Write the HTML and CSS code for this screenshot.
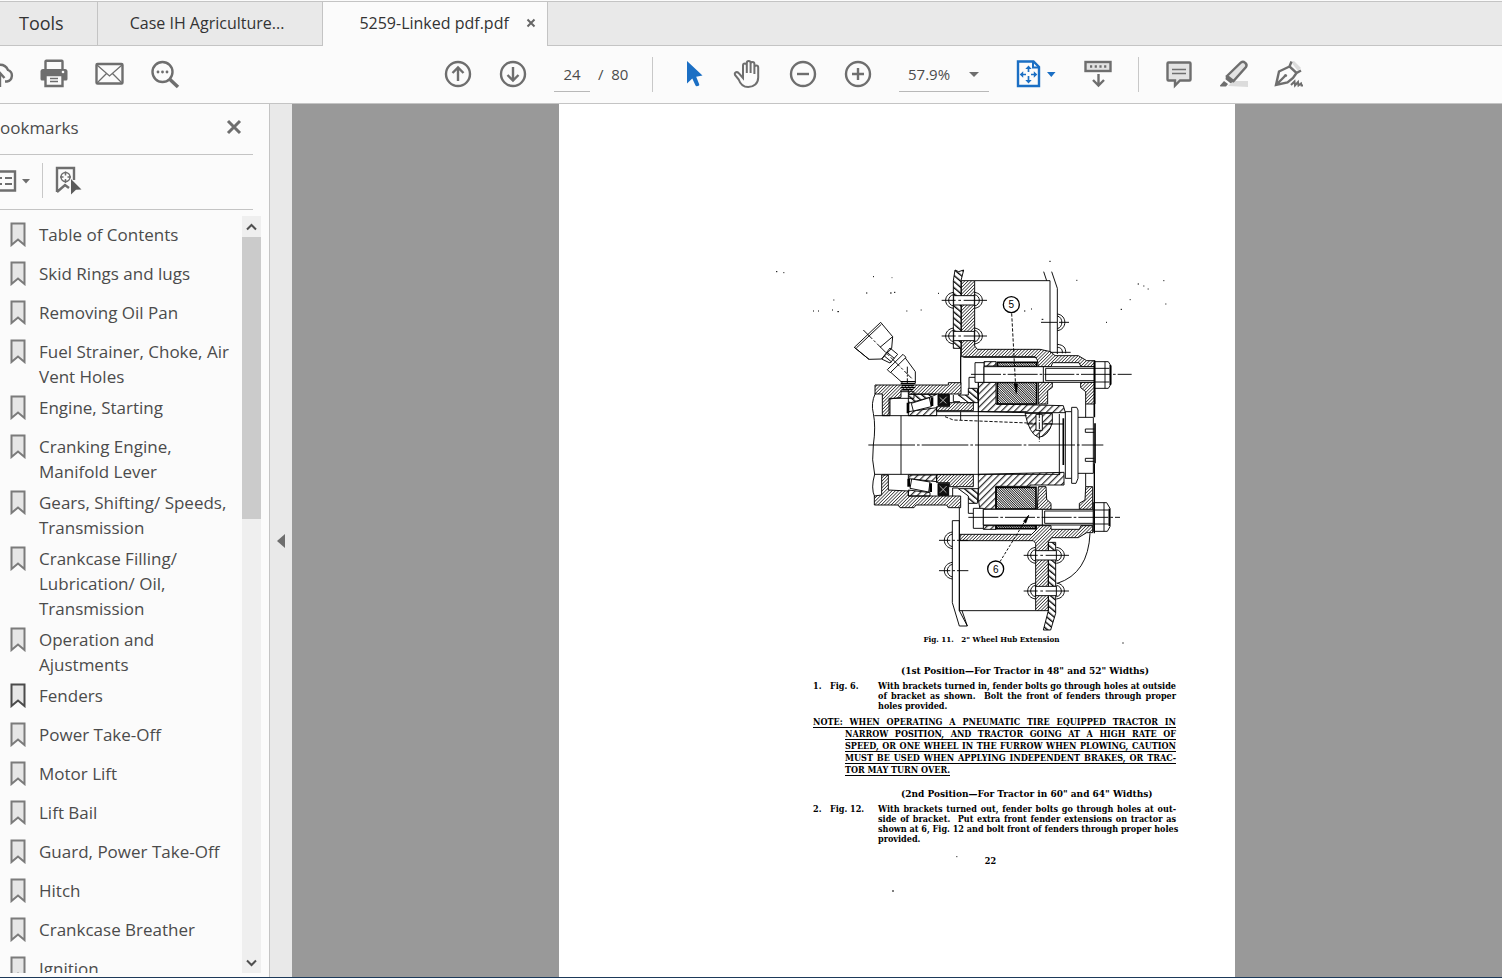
FILE: index.html
```html
<!DOCTYPE html>
<html lang="en">
<head>
    <meta charset="UTF-8">
    <meta name="viewport" content="width=device-width, initial-scale=1.0">
    <title>5259-Linked pdf.pdf</title>
    <link rel="stylesheet" href="styles.css">
</head>
<body>

<!-- TABS -->
<nav class="tabs">
    <button class="tab tab-tools">Tools</button>
    <button class="tab tab-doc">Case IH Agriculture...</button>
    <div class="tab tab-current">
        <span>5259-Linked pdf.pdf</span>
        <button class="tab-close" aria-label="Close tab">
            <svg width="10" height="10" viewBox="0 0 10 10"><path d="M1.500 1.500l7 7M8.500 1.500l-7 7" stroke="#666" stroke-width="2"/></svg>
        </button>
    </div>
</nav>

<!-- TOOLBAR -->
<header class="toolbar">
    <div class="tool-group">
        <button class="tool tool-cut" aria-label="Upload">
            <svg width="14" height="28" viewBox="14 0 14 28"><path d="M5 12a9 9 0 0 1 17-2a6 6 0 0 1-1 11.500h-2M14 27V14M8.500 18.500l5.500-5.500l4.500 5"/></svg>
        </button>
        <button class="tool" aria-label="Print">
            <svg width="28" height="28" viewBox="0 0 28 28">
                <path d="M5.500 9V1.500q0-.7.7-.7h15.600q.7 0 .7.7V9" fill="#fbfbfb"/>
                <path d="M3 9h22q2.500 0 2.500 2.500V19q0 1.500-1.500 1.500H2Q.5 20.500.5 19v-7.500Q.5 9 3 9z" fill="#6e6e6e" stroke="none"/>
                <path d="M5.500 15h17v11h-17z" fill="#fbfbfb"/>
                <path d="M10 18.500h8M10 21.500h8" stroke-width="1.500"/>
                <circle cx="23" cy="12" r="1.300" fill="#fbfbfb" stroke="none"/>
            </svg>
        </button>
        <button class="tool" aria-label="Email">
            <svg width="28" height="28" viewBox="0 0 28 28"><rect x="1.500" y="4" width="26" height="19.500" rx="1"/><path d="M2 5l12.500 11L27 5M2 23l9.500-9.500M27 23l-9.500-9.500" stroke-width="1.300"/></svg>
        </button>
        <button class="tool" aria-label="Find">
            <svg width="30" height="28" viewBox="0 0 30 28"><circle cx="12.500" cy="12" r="10"/><path d="M20 19.500l8 7.500" stroke-width="3.500"/><g fill="#6e6e6e" stroke="none"><circle cx="8" cy="12" r="1.400"/><circle cx="12.500" cy="12" r="1.400"/><circle cx="17" cy="12" r="1.400"/></g></svg>
        </button>
    </div>

    <div class="tool-group tool-main">
        <button class="tool" aria-label="Previous page">
            <svg width="28" height="28" viewBox="0 0 28 28"><circle cx="14" cy="14" r="12"/><path d="M14 21V8M8.500 13L14 7.500l5.500 5.500"/></svg>
        </button>
        <button class="tool" aria-label="Next page">
            <svg width="28" height="28" viewBox="0 0 28 28"><circle cx="14" cy="14" r="12"/><path d="M14 7v13M8.500 15l5.500 5.500l5.500-5.500"/></svg>
        </button>
        <div class="page-nav">
            <input class="page-input" type="text" value="24" aria-label="Page number">
            <span>/&nbsp; 80</span>
        </div>
        <span class="separator"></span>
        <button class="tool" aria-label="Select">
            <svg width="28" height="28" viewBox="0 0 28 28"><path d="M8 1l15.500 14.500l-6.300 1.200l3 7.500q.3 1-.6 1.500l-1.600.6q-1 .2-1.500-.7l-3.200-7.100L8 23.500z" fill="#1b6fc4" stroke="none"/></svg>
        </button>
        <button class="tool" aria-label="Hand">
            <svg width="28" height="28" viewBox="0 0 28 28"><path stroke-width="2" d="M9 15V5.500q0-2 1.900-2t1.900 2V13V3q0-2 1.900-2t1.900 2v10V4q0-2 1.900-2t1.900 2v10V7.500q0-2 1.900-2t1.900 2v10c0 6-4.500 9.500-10 9.500c-5 0-8-3-9.500-7.500L1 15q-.8-2 1-2.700t3 1.200L9 18z"/></svg>
        </button>
        <button class="tool" aria-label="Zoom out">
            <svg width="28" height="28" viewBox="0 0 28 28"><circle cx="14" cy="14" r="12"/><path d="M8 14h12"/></svg>
        </button>
        <button class="tool" aria-label="Zoom in">
            <svg width="28" height="28" viewBox="0 0 28 28"><circle cx="14" cy="14" r="12"/><path d="M8 14h12M14 8v12"/></svg>
        </button>
        <div class="zoom-box">
            <select class="zoom-select" aria-label="Zoom level"><option>57.9%</option></select>
        </div>
        <button class="tool tool-fit" aria-label="Fit page">
            <svg width="40" height="28" viewBox="0 0 40 28">
                <g stroke="#1b6fc4">
                    <path d="M2 1.500h15.500l5.500 5.500v19H2z"/><path d="M17 1v6.500h6" stroke-width="2"/>
                    <path d="M12.500 8v4M12.500 16v5M6 14.500h4M15 14.500h4" stroke-width="1.700"/>
                </g>
                <path d="M12.500 5.500l3.200 3.500H9.300zM12.500 23.500l3.200-3.500H9.300zM3.700 14.500l3.500-3.200v6.400zM21.300 14.500l-3.500-3.200v6.400zM31 12h8.500l-4.200 5z" fill="#1b6fc4" stroke="none"/>
            </svg>
        </button>
        <button class="tool" aria-label="Scrolling">
            <svg width="28" height="28" viewBox="0 0 28 28"><rect x="1.500" y="2" width="25" height="9" fill="#e3e3e3"/><path d="M6 6.500h17" stroke-width="2.600" stroke-dasharray="2.200 2.500"/><path d="M14.500 14v11M9 20l5.500 5.500L20 20"/></svg>
        </button>
        <span class="separator"></span>
        <button class="tool" aria-label="Comment">
            <svg width="28" height="28" viewBox="0 0 28 28"><path d="M3.500 2.500h21q1 0 1 1v16q0 1-1 1H15l-5 5v-5H3.500q-1 0-1-1v-16q0-1 1-1z" fill="#e3e3e3"/><path d="M7 9.500h14M7 13.500h14" stroke-width="1.400"/></svg>
        </button>
        <button class="tool" aria-label="Highlight">
            <svg width="28" height="28" viewBox="0 0 28 28"><path d="M8 26l5-5h15v6z" fill="#dcdcdc" stroke="none"/><path d="M7 16L21 2.500q2-1.500 4 .2q2.500 2 1 4.300L13.500 21z" fill="#e3e3e3"/><path d="M6 15.500l8 6l-3.500 1.700l-5-4zM0 25.500L4 21l4 3l-2 2.500H1q-1.500 0-1-1z" fill="#6e6e6e" stroke="none"/></svg>
        </button>
        <button class="tool" aria-label="Sign">
            <svg width="28" height="28" viewBox="0 0 28 28"><path d="M16 2l3-1l7 7l-3 3z" fill="#dcdcdc" stroke="none"/><path d="M16.500 1.500L14.500 6.500l7 6.500l4.500-2.500M14.500 6.500L4 11.500L1 25l11.500-2.500L18 18l3.500-5M1.500 24.500l8.500-8.500"/><circle cx="10.500" cy="15.500" r="1.600" fill="#6e6e6e" stroke="none"/><path d="M16 25l3.500-3.500l.5 4l3-3.500l.5 3.500l2.500-2l.5 2h1.500" stroke-width="2"/></svg>
        </button>
    </div>
</header>

<main class="workspace">
    <!-- BOOKMARKS -->
    <aside class="sidebar">
        <div class="sidebar-header">
            <h2>ookmarks</h2>
            <button class="tool" aria-label="Close panel">
                <svg width="16" height="16" viewBox="0 0 16 16"><path d="M2 1l12 12M14 1L2 13" stroke-width="3"/></svg>
            </button>
        </div>
        <div class="sidebar-tools">
            <button class="tool" aria-label="Options">
                <svg width="30" height="28" viewBox="0 0 30 28"><path d="M-3 4.500h18v19H-3" stroke-width="2.400"/><path d="M0 11h2M5 11h7M0 17h2M5 17h7" stroke-width="2"/><path d="M22 12h8l-4 4.500z" fill="#6e6e6e" stroke="none"/></svg>
            </button>
            <span class="separator"></span>
            <button class="tool" aria-label="Find current bookmark">
                <svg width="28" height="30" viewBox="2 1 28 30"><path d="M2 27V3h17v12M2 27l8-7l4 3" stroke-width="2.400"/><circle cx="10.500" cy="12" r="4.500" stroke-width="1.500"/><path d="M10.500 6.500v4M10.500 14v4M5 12h3.500M12.500 12H16" stroke-width="1.500"/><path d="M16 14l10.500 10.500l-5.500.3l-5 4.700z" fill="#5c5c5c" stroke="none"/></svg>
            </button>
        </div>
        <div class="bookmarks">
            <ul class="bookmark-list" id="bookmark-list">
                <!-- filled by script.js -->
            </ul>
            <div class="scrollbar">
                <button class="scroll-btn" aria-label="Scroll up"><svg width="11" height="8" viewBox="0 0 11 8"><path d="M1 6.500l4.500-4.500L10 6.500"/></svg></button>
                <div class="scroll-thumb"></div>
                <button class="scroll-btn scroll-down" aria-label="Scroll down"><svg width="11" height="8" viewBox="0 0 11 8"><path d="M1 1.500L5.500 6L10 1.500"/></svg></button>
            </div>
        </div>
    </aside>
    <button class="collapse" aria-label="Collapse panel">
        <svg width="8" height="14" viewBox="0 0 8 14"><path d="M8 0v14L0 7z" fill="#6e6e6e"/></svg>
    </button>

    <!-- DOCUMENT -->
    <section class="viewer">
        <article class="sheet">
            <figure class="drawing">
                <svg viewBox="-81 0 1089 1110">
                    <defs>
                        <pattern id="fine" width="7" height="7" patternUnits="userSpaceOnUse" patternTransform="rotate(45)"><path d="M1 0v7" stroke="#000" stroke-width="2"/></pattern>
                        <pattern id="coarse" width="14" height="14" patternUnits="userSpaceOnUse" patternTransform="rotate(45)"><path d="M2 0v14" stroke="#000" stroke-width="3"/></pattern>
                        <pattern id="coarse-back" width="14" height="14" patternUnits="userSpaceOnUse" patternTransform="rotate(-50)"><path d="M2 0v14" stroke="#000" stroke-width="4"/></pattern>
                        <pattern id="dense" width="5" height="5" patternUnits="userSpaceOnUse" patternTransform="rotate(-45)"><path d="M1 0v5" stroke="#000" stroke-width="2.500"/></pattern>
                        <g id="rivet">
                            <path d="M0-24C-32-20-32 20 0 24M0-17C-20-14-20 14 0 17M62-24C94-20 94 20 62 24M62-17C82-14 82 14 62 17" fill="none"/>
                            <rect y="-14" width="62" height="28" fill="#fff"/>
                            <path d="M-36 0h42m8 0h8m8 0h70" fill="none"/>
                        </g>
                        <path id="half-rivet" d="M0-25C-32-20-32 20 0 25M0-19C-20-14-20 14 0 19M-40 0h34m6 0h8m6 0h34"/>
                    </defs>

                    <!-- upper left -->
                    <g class="ink">
                        <path d="M43 262L122 187L158 230L155 265L125 297L87 298zM49 264L124 193M87 298L43 262M125 297L150 264L173 283L150 309zM133 288l22 18M141 277l22 18M150 335L188 369M196 294L226 335V370M158 230L120 262"/>
                        <path d="M142 329L189 283L198 292L151 338z" fill="#fff"/>
                        <path d="M70 210L215 355" stroke-dasharray="38 6 8 6"/>
                        <path d="M202 320V372" stroke-dasharray="20 5 5 5"/>
                        <path d="M182 365H226M182 371H226M185 377H222M182 383H226M188 389H220" stroke-width="4"/>
                        <path d="M345 30L356 35L371 30L363 62V265H340V62z" fill="url(#coarse-back)"/>
                        <path d="M364 62H404V258L412 268H600L632 275L645 287H715L740 302H765V320H723L717 308H638L633 320H595L592 300L585 290H364z" fill="url(#fine)"/>
                        <path d="M404 62H630M362 265V370M362 290V370M370 292H590"/>
                        <path d="M105 375H325V368H363V402H205V390H183V412L150 417V467H127V402H105z" fill="url(#fine)"/>
                        <path d="M183 395H222V415H147V467M106 400Q92 430 100 460Q108 500 100 555Q94 600 104 643Q92 685 104 710"/>
                        <path d="M205 403H290L270 412L205 430z" fill="url(#coarse-back)"/>
                        <path d="M205 467V455L290 443V467z" fill="url(#coarse)"/>
                        <path d="M214 430L268 413L274 440L220 453z" fill="#fff"/>
                        <path d="M204 428v32M276 412v26" stroke-width="8"/>
                        <path d="M294 403H328V437H294z" fill="#111"/>
                        <path d="M299 412l20 18M320 410l-20 20" stroke="#fff" stroke-width="2"/>
                        <path d="M328 428H400V452H290V440H328z" fill="url(#fine)"/>
                        <path d="M355 405H385V385H412L415 428H385z" fill="url(#coarse-back)"/>
                        <path d="M387 385V352H405M340 405V425H360"/>
                    </g>
                    <use href="#rivet" x="341" y="121" class="ink"/>
                    <use href="#rivet" x="341" y="228" class="ink"/>

                    <!-- shaft -->
                    <g class="ink">
                        <path d="M103 467H560M103 643H660M183 467V643M415 360V643M290 455H560" />
                        <path d="M85 555H790" stroke-dasharray="140 6 8 6"/>
                        <path d="M315 470L340 480L640 492" stroke-dasharray="10 5"/>
                        <path d="M362 455v25M560 492H672"/>
                    </g>

                    <!-- upper right -->
                    <g class="ink" transform="translate(420 0)">
                        <path d="M191 35L200 62M215 35L232 85V282M210 62V275"/>
                        <path d="M232 162C262 166 262 208 232 212M232 168C250 172 250 202 232 206M183 187h48m6 0h30M232 253C250 255 258 262 257 280M232 262C244 262 248 270 247 280M210 277h62"/>
                        <path d="M5 367H48V432L250 437L256 458H140L0 455H-5V367z" fill="url(#coarse)"/>
                        <path d="M12 305H48V318H12z" fill="url(#coarse)"/>
                        <path d="M52 307H170V320H52zM52 367H170V432H52z" fill="url(#dense)" stroke-width="5"/>
                        <path d="M175 367H217V382L203 392V432H175z" fill="url(#fine)"/>
                        <path d="M302 367H345V432H317V395L302 383z" fill="url(#fine)"/>
                        <path d="M-15 308H12V367H-15z" fill="#fff"/>
                        <path d="M12 320H345V367H12zM190 320V367M197 325V362M197 325H345M197 362H345" fill="#fff"/>
                        <path d="M345 305H385L393 318V372L385 385H345zM345 325H388M345 366H388M375 305V385" fill="#fff"/>
                        <path d="M391 315V375" stroke-width="5"/>
                        <path d="M-27 343H455" stroke-dasharray="90 6 8 6"/>
                        <path d="M135 460H217V488Q205 530 175 532Q148 522 135 460z" fill="url(#coarse)"/>
                        <path d="M168 463H187V511H168z" fill="#fff"/>
                        <path d="M178 455V545" stroke-dasharray="20 4 4 4"/>
                        <path d="M238 462V643M256 455H275V442H290L294 450V655L288 670H275V655H256zM275 455V655M294 472H340M294 640H340M317 432V472M317 640V680" />
                        <path d="M250 475V615M343 302V472M345 490V610" stroke-width="5"/>
                        <path d="M340 472V640M343 507H316V517H343M343 595H316V604H343"/>
                        <circle cx="94" cy="134" r="24" fill="#fff" stroke-width="4"/>
                        <path d="M95 160L107 380" stroke-dasharray="10 5"/>
                        <path d="M103 372h9l-3 28z" fill="#000"/>
                    </g>

                    <!-- lower left -->
                    <g class="ink" transform="translate(0 540)">
                        <path d="M103 168L125 165V105H145V150L205 153V168H362V203H325L320 195H228L222 203H180L174 195H103z" fill="url(#fine)"/>
                        <path d="M205 105H290V125L205 116zM205 168V150L270 158V168z" fill="url(#coarse)"/>
                        <path d="M215 117L270 126L266 156L210 145z" fill="#fff"/>
                        <path d="M206 116v24M272 130v26" stroke-width="8"/>
                        <path d="M294 131H326V166H294z" fill="#111"/>
                        <path d="M299 138l20 20M320 138l-20 20" stroke="#fff" stroke-width="2"/>
                        <path d="M290 104H400V140H328V128H290z" fill="url(#fine)"/>
                        <path d="M355 146H415L412 190H385V168z" fill="url(#coarse-back)"/>
                        <path d="M385 190V220H400M338 168V144H355M358 203V512H587M337 242H358V512L382 558H358L337 488zM366 512L382 558"/>
                    </g>
                    <use href="#half-rivet" x="337" y="841" class="ink"/>
                    <use href="#half-rivet" x="337" y="932" class="ink"/>

                    <!-- lower right -->
                    <g class="ink" transform="translate(420 540)">
                        <path d="M-5 103L120 100L252 97V135H150V139H48V207H0L-5 180z" fill="url(#coarse)"/>
                        <path d="M48 142H168V207H48zM48 257H168V266H48z" fill="url(#dense)" stroke-width="5"/>
                        <path d="M10 257H48V268H10z" fill="url(#coarse)"/>
                        <path d="M175 140H198L200 178L213 190V208H172z" fill="url(#fine)"/>
                        <path d="M317 140H338V208H298V190L315 180z" fill="url(#fine)"/>
                        <path d="M-60 283H155L168 270V257H213V268H298L303 257H338V278H320L295 293H215L205 305V512H167V310L160 302H-60z" fill="url(#fine)"/>
                        <path d="M205 307H227V520L212 570H190L205 512z" fill="url(#coarse-back)"/>
                        <path d="M-20 205H10V265H-20z" fill="#fff"/>
                        <path d="M10 208H340V255H10zM187 208V255M194 213V250M194 213H340M194 250H340" fill="#fff"/>
                        <path d="M340 188H380L390 205V260L382 274H340zM340 210H386M340 252H386M372 188V274" fill="#fff"/>
                        <path d="M388 206V258" stroke-width="5"/>
                        <path d="M-35 232H420" stroke-dasharray="90 6 8 6"/>
                        <path d="M343 70V280" stroke-width="4"/>
                        <path d="M330 280Q325 400 232 430"/>
                        <circle cx="47" cy="387" r="24" fill="#fff" stroke-width="4"/>
                        <path d="M60 365L132 248" stroke-dasharray="8 5"/>
                        <path d="M146 226L131 244L137 249z" fill="#000"/>
                    </g>
                    <use href="#rivet" x="587" y="886" class="ink"/>
                    <use href="#rivet" x="587" y="993" class="ink"/>

                    <g class="callout">
                        <text x="514" y="145">5</text>
                        <text x="467" y="938">6</text>
                    </g>
                    <!-- scan specks -->
                    <path class="specks" d="M-192 35h4M-170 38h3M99 50h3M155 53h2M78 99h4M150 99h5M162 97h4M294 100h3M199 153h3M242 150h3M-24 150h3M-8 155h5M-20 120h3M628 4h4M709 61h3M893 72h4M910 78h3M869 119h3M842 148h4M798 187h3M573 147h3M552 153h4M605 178h5M847 1149h4M-81 153h3M-66 153h3M970 62h3M923 87h3M976 132h3M156 1893h6M349 1790h3"/>
                </svg>
                <figcaption>Fig. 11.&nbsp;&nbsp; 2" Wheel Hub Extension</figcaption>
            </figure>

            <h3>(1st Position—For Tractor in 48" and 52" Widths)</h3>
            <div class="step">
                <span>1.&nbsp;&nbsp; Fig. 6.</span>
                <p>With brackets turned in, fender bolts go through holes at outside<br>of bracket as shown.&nbsp; Bolt the front of fenders through proper<span class="last">holes provided.</span></p>
            </div>
            <p class="note"><span class="first">NOTE: WHEN OPERATING A PNEUMATIC TIRE EQUIPPED TRACTOR IN</span>NARROW POSITION, AND TRACTOR GOING AT A HIGH RATE OF<br>SPEED, OR ONE WHEEL IN THE FURROW WHEN PLOWING, CAUTION<br>MUST BE USED WHEN APPLYING INDEPENDENT BRAKES, OR TRAC-<span class="last">TOR MAY TURN OVER.</span></p>
            <h3>(2nd Position—For Tractor in 60" and 64" Widths)</h3>
            <div class="step">
                <span>2.&nbsp;&nbsp; Fig. 12.</span>
                <p>With brackets turned out, fender bolts go through holes at out-<br>side of bracket.&nbsp; Put extra front fender extensions on tractor as<br>shown at 6, Fig. 12 and bolt front of fenders through proper holes<span class="last">provided.</span></p>
            </div>
            <p class="folio">22</p>
        </article>
    </section>
</main>

<script src="script.js"></script>
</body>
</html>
```

FILE: styles.css
```css
:root {
    --bar-bg: #e9e9e9;
    --panel-bg: #fbfbfb;
    --border-color: #c4c4c4;
    --icon-color: #6e6e6e;
    --text-color: #4b4b4b;
    --viewer-bg: #999999;
}

* { margin: 0; padding: 0; box-sizing: border-box; }
body {
    display: flex;
    flex-direction: column;
    height: 100vh;
    overflow: hidden;
    border-bottom: 1px solid #1d3a5a;
    font-family: "Open Sans", "Noto Sans", sans-serif;
    color: var(--text-color);
    background-color: var(--panel-bg);
}
button, input, select { font: inherit; color: inherit; background: none; border: none; }
button { cursor: pointer; }
svg { display: block; }

/* Tabs */
.tabs {
    display: flex;
    flex: none;
    height: 45px;
    margin-top: 1px;
    border-top: 1px solid var(--border-color);
    background-color: var(--bar-bg);
    box-shadow: inset 0 -1px var(--border-color);
    color: #333;
    font-size: 16px;
}
.tab {
    display: flex;
    align-items: center;
    padding-bottom: 2px;
    border-right: 1px solid var(--border-color);
}
.tab-tools { padding-left: 19px; padding-right: 33px; font-size: 18px; }
.tab-doc { padding-left: 32px; padding-right: 38px; }
.tab-current { padding-left: 36px; padding-right: 11px; gap: 17px; background-color: var(--panel-bg); }

/* Toolbar */
.toolbar {
    display: flex;
    flex: none;
    align-items: center;
    height: 58px;
    padding-bottom: 1px;
    border-bottom: 1px solid var(--border-color);
    font-size: 15px;
}
.tool-group { display: flex; align-items: center; gap: 27px; }
.tool-main { margin-left: 266px; }
.tool { width: 28px; flex: none; }
.tool-cut { width: 13px; }
.tool-fit { width: 41px; }
.tool svg { fill: none; stroke: var(--icon-color); stroke-width: 2.4; overflow: visible; }
.tool-cut svg { overflow: hidden; }
.separator { width: 1px; height: 35px; margin: 0 -1px; background-color: #c8c8c8; }
.page-nav { display: flex; align-items: center; gap: 8px; width: 72px; white-space: nowrap; }
.page-input { width: 36px; height: 36px; flex: none; text-align: center; border-bottom: 1px solid #b8b8b8; }
.zoom-box { position: relative; width: 90px; }
.zoom-box::after {
    content: "";
    position: absolute;
    right: 10px;
    top: 16px;
    border: 5px solid transparent;
    border-top-color: var(--icon-color);
    border-bottom: none;
    pointer-events: none;
}
.zoom-select { width: 100%; height: 36px; padding-left: 9px; appearance: none; border-bottom: 1px solid #b8b8b8; }

/* Bookmarks panel */
.workspace { display: flex; flex: 1; min-height: 0; }
.sidebar {
    display: flex;
    flex-direction: column;
    width: 270px;
    flex: none;
    border-right: 1px solid var(--border-color);
}
.sidebar-header, .sidebar-tools {
    display: flex;
    align-items: center;
    flex: none;
    margin-right: 16px;
    padding-bottom: 3px;
    border-bottom: 1px solid var(--border-color);
}
.sidebar-header { height: 51px; justify-content: space-between; }
.sidebar-header .tool { width: 27px; }
.sidebar-header h2 { font-size: 17px; font-weight: 400; }
.sidebar-tools { height: 55px; gap: 15px; }
.bookmarks { display: flex; flex: 1; min-height: 0; padding: 6px 8px 4px 0; }
.bookmark-list { flex: 1; padding-top: 3px; overflow: hidden; list-style: none; }
.bookmark-list a {
    display: flex;
    align-items: flex-start;
    gap: 13px;
    min-height: 39px;
    padding: 3px 0 3px 10px;
    color: inherit;
    font-size: 17px;
    line-height: 25px;
    text-decoration: none;
    white-space: pre-line;
}
.bookmark-list svg { flex: none; fill: #e6e6e6; stroke: #7b7b7b; stroke-width: 2; }
.bookmark-list .selected svg { stroke: #4b4b4b; }
.scrollbar { display: flex; flex-direction: column; width: 19px; background-color: #efefef; }
.scroll-btn { display: flex; align-items: center; justify-content: center; height: 21px; }
.scroll-btn svg { fill: none; stroke: #505050; stroke-width: 2; }
.scroll-thumb { height: 282px; background-color: #cbcbcb; }
.scroll-down { margin-top: auto; }
.collapse {
    display: flex;
    align-items: center;
    justify-content: center;
    width: 22px;
    flex: none;
    background-color: var(--bar-bg);
}

/* Document */
.viewer { display: flex; justify-content: center; flex: 1; background-color: var(--viewer-bg); }
.sheet {
    width: 676px;
    padding: 156px 59px 0 254px;
    background-color: #fff;
    color: #000;
    font-family: "DejaVu Serif Condensed", "DejaVu Serif", serif;
    font-size: 9px;
    font-weight: 700;
    line-height: 10px;
}
.drawing svg { width: 100%; overflow: visible; }
.drawing figcaption { padding-top: 4px; padding-right: 6px; font-size: 8px; text-align: center; }
.ink { fill: none; stroke: #000; stroke-width: 2.8; }
.callout { font-family: "Liberation Sans", sans-serif; font-size: 30px; font-weight: 400; text-anchor: middle; }
.specks { stroke: #000; stroke-width: 3; }
.sheet h3 { padding: 0 22px 0 88px; font-size: 10px; line-height: 12px; white-space: nowrap; }
.drawing + h3 { margin-top: 21px; }
.step { display: flex; justify-content: space-between; margin-top: 4px; white-space: nowrap; }
.step p, .note { text-align-last: justify; }
.step p { width: 298px; }
.last { display: block; text-align-last: left; }
.note {
    margin: 5px 0 12px;
    padding-left: 32px;
    line-height: 12px;
    text-decoration: underline;
    text-underline-offset: 2px;
    white-space: nowrap;
}
.note span { display: block; text-decoration: underline; }
.first { margin-left: -32px; }
.folio { margin-top: 12px; padding-right: 8px; text-align: center; }
```

FILE: script.js
```js
const bookmarks = [
    'Table of Contents',
    'Skid Rings and lugs',
    'Removing Oil Pan',
    'Fuel Strainer, Choke, Air\nVent Holes',
    'Engine, Starting',
    'Cranking Engine,\nManifold Lever',
    'Gears, Shifting/ Speeds,\nTransmission',
    'Crankcase Filling/\nLubrication/ Oil,\nTransmission',
    'Operation and\nAjustments',
    'Fenders',
    'Power Take-Off',
    'Motor Lift',
    'Lift Bail',
    'Guard, Power Take-Off',
    'Hitch',
    'Crankcase Breather',
    'Ignition'
];

const list = document.getElementById('bookmark-list');

bookmarks.forEach(title => {
    list.innerHTML += `
        <li class="${title === 'Fenders' ? 'selected' : ''}">
            <a href="#"><svg width="16" height="25" viewBox="0 0 16 25"><path d="M1.500 1.500h13v21.500L8 17.500L1.500 23z"/></svg><span>${title}</span></a>
        </li>
    `;
});
```
